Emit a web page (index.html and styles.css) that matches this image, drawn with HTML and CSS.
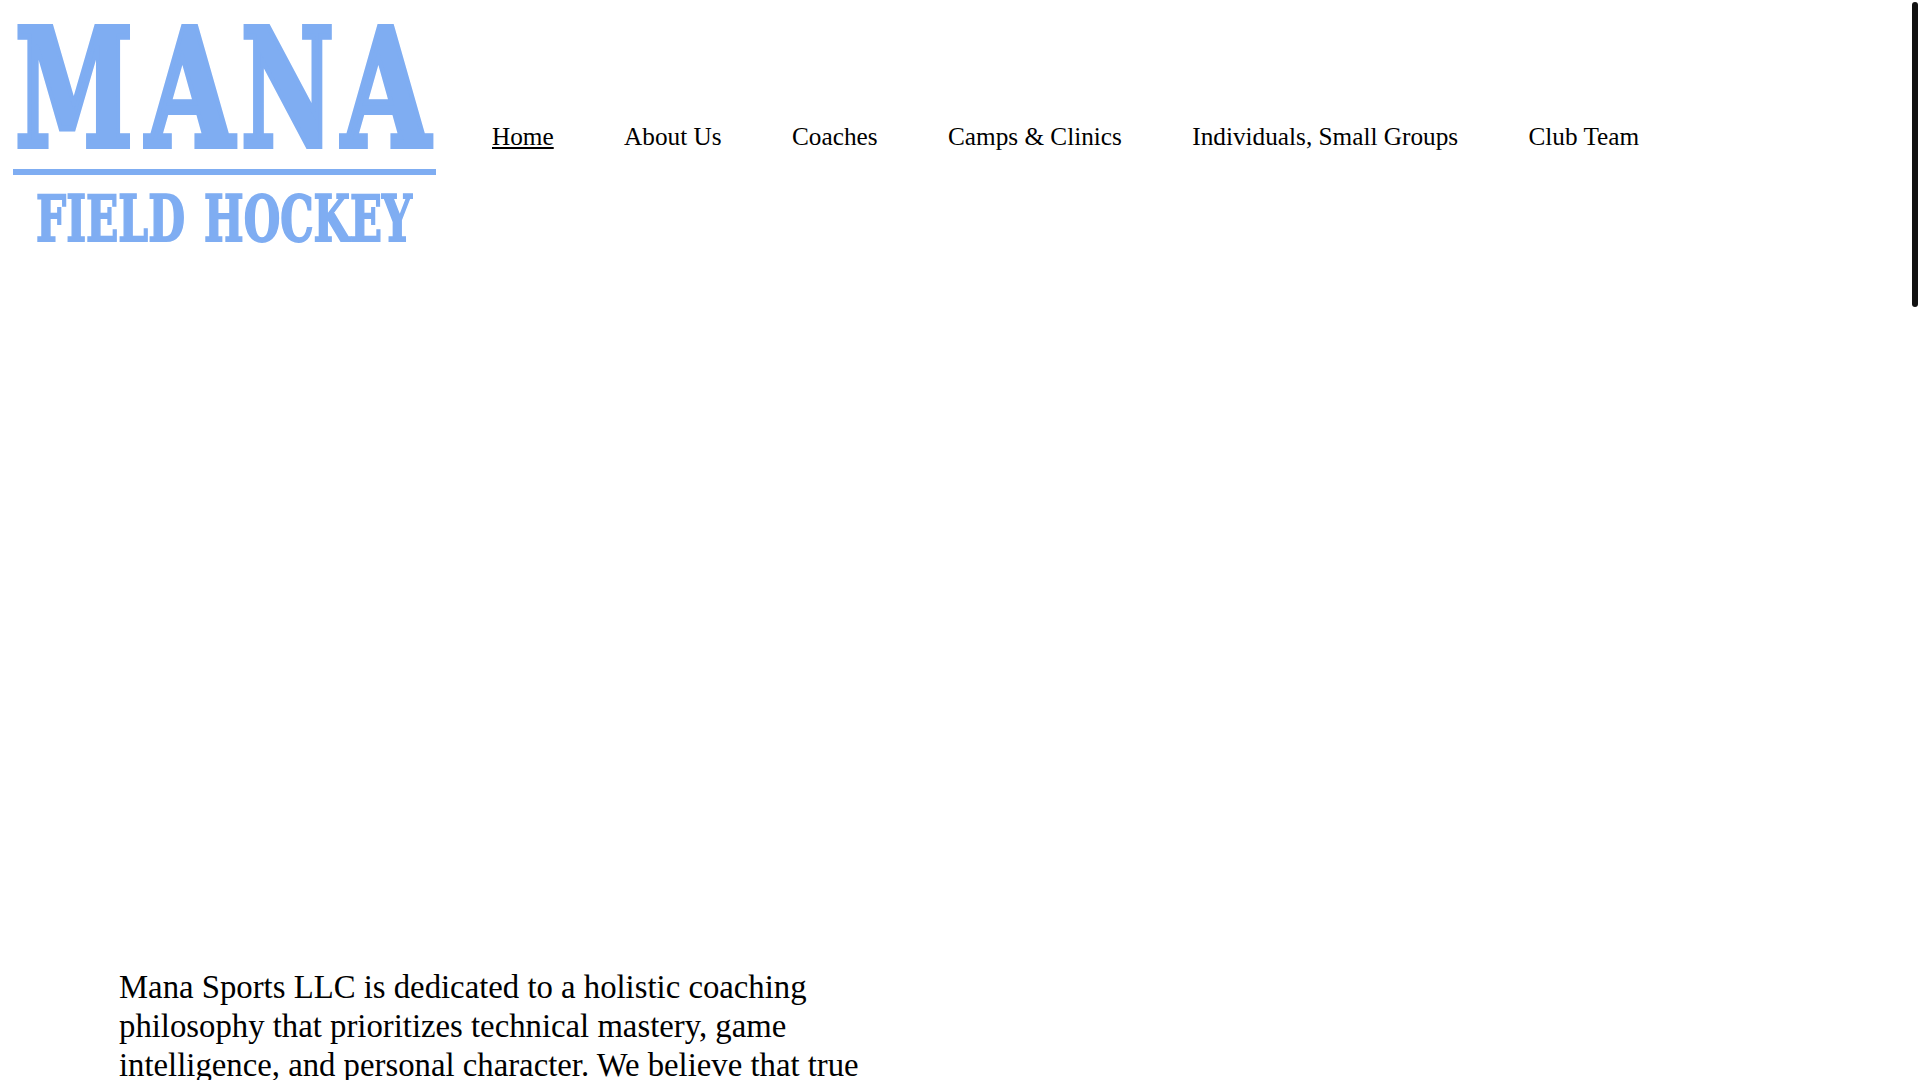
FILE: index.html
```html
<!DOCTYPE html>
<html lang="en">
<head>
<meta charset="utf-8">
<title>Mana Field Hockey</title>
<link rel="stylesheet" href="styles.css">
</head>
<body>
<header class="site-header">
  <a class="logo" href="#" aria-label="Mana Field Hockey">
    <svg class="logo-art" viewBox="0 0 455 274" width="455" height="274">
      <text class="logo-main" y="146"><tspan x="15" textLength="118" lengthAdjust="spacingAndGlyphs">M</tspan><tspan x="146" textLength="88" lengthAdjust="spacingAndGlyphs">A</tspan><tspan x="241" textLength="93" lengthAdjust="spacingAndGlyphs">N</tspan><tspan x="342" textLength="88" lengthAdjust="spacingAndGlyphs">A</tspan></text>
      <rect class="logo-rule" x="13" y="169" width="423" height="6"></rect>
      <text class="logo-sub" y="241"><tspan x="36" textLength="149" lengthAdjust="spacingAndGlyphs">FIELD</tspan><tspan x="204" textLength="208" lengthAdjust="spacingAndGlyphs">HOCKEY</tspan></text>
    </svg>
  </a>
  <nav class="main-nav">
    <a class="nav-link is-current" href="#">Home</a>
    <a class="nav-link" href="#">About Us</a>
    <a class="nav-link" href="#">Coaches</a>
    <a class="nav-link" href="#">Camps &amp; Clinics</a>
    <a class="nav-link" href="#">Individuals, Small Groups</a>
    <a class="nav-link" href="#">Club Team</a>
  </nav>
</header>
<main class="content">
  <p class="intro">Mana Sports LLC is dedicated to a holistic coaching philosophy that prioritizes technical mastery, game intelligence, and personal character. We believe that true development happens on and off the field.</p>
</main>
<div class="scroll-thumb"></div>
</body>
</html>
```
FILE: styles.css
```css
html, body {
  margin: 0;
  height: 100%;
  overflow: hidden;
  background: #fff;
}
body {
  font-family: "Liberation Serif", "Times New Roman", serif;
  color: #000;
}
.site-header {
  display: flex;
  align-items: center;
  height: 274px;
}
.logo {
  display: block;
  flex: none;
  width: 455px;
  height: 274px;
}
.logo-art {
  display: block;
}
.logo-main,
.logo-sub {
  font-family: "DejaVu Serif", serif;
  font-weight: 700;
  fill: #7fadf2;
  stroke: #7fadf2;
  stroke-linejoin: miter;
}
.logo-main {
  font-size: 162px;
  stroke-width: 6px;
}
.logo-sub {
  font-size: 64px;
  stroke-width: 2px;
}
.logo-rule {
  fill: #7fadf2;
}
.main-nav {
  display: flex;
  gap: 70.4px;
  margin: 0 0 2px 37px;
  font-size: 25.25px;
}
.nav-link {
  color: #000;
  text-decoration: none;
}
.nav-link.is-current {
  text-decoration: underline;
}
.content {
  padding: 694px 0 0 119px;
}
.intro {
  margin: 0;
  width: 768px;
  font-size: 32.75px;
  line-height: 39px;
}
.scroll-thumb {
  position: fixed;
  top: 2px;
  right: 2px;
  width: 6px;
  height: 305px;
  border-radius: 3px;
  background: #111;
}
```
